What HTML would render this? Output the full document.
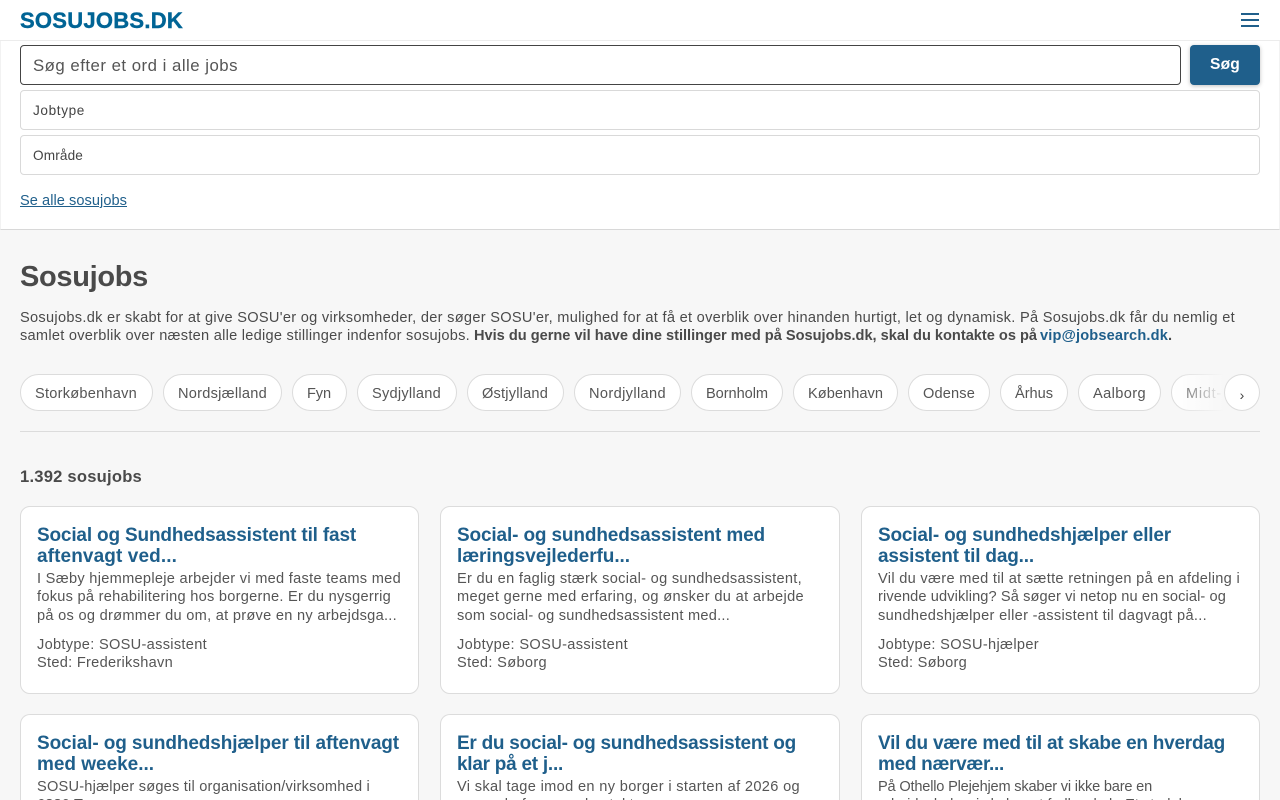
<!DOCTYPE html>
<html lang="da">
<head>
<meta charset="utf-8">
<title>Sosujobs</title>
<style>
html,body{margin:0;padding:0;width:1280px;height:800px;overflow:hidden;background:#f7f7f7;font-family:"Liberation Sans",sans-serif;color:#4a4a4a}
#page{position:relative;width:1280px;height:800px;overflow:hidden;background:#f7f7f7}
a{color:inherit}
.t{position:absolute;white-space:nowrap;line-height:20px;display:block}
.box{position:absolute;box-sizing:border-box;background:#fff}
#hdr{position:absolute;left:0;top:0;width:1280px;height:41px;background:#fff;border-bottom:1px solid #ececec;box-sizing:border-box}
#panel{position:absolute;left:0;top:41px;width:1280px;height:189px;background:#fff;border-bottom:1px solid #d8d8d8;border-left:1px solid #f2f2f2;border-right:1px solid #f2f2f2;box-sizing:border-box}
.bar{position:absolute;left:1241px;width:18px;height:2px;background:#1f5f8b}
.sel{border:1px solid #d9d9d9;border-radius:4px;left:20px;width:1240px;height:40px}
.chip{top:374px;height:37px;border:1px solid #dcdcdc;border-radius:19px}
.chip .t{left:14px;top:9px;font-size:14.6px;color:#555}
.card{width:400px;height:188px;border:1px solid #dcdcdc;border-radius:10px}
.card.cut{height:86px;border-bottom:0;border-radius:10px 10px 0 0;overflow:hidden}
.card .t{left:16px}
.h1,.h2{font-size:19px;font-weight:700;color:#1f5f8b}
.h1{top:19px}.h2{top:40px}
.d1,.d2,.d3,.m1,.m2{font-size:14.6px;color:#555}
.d1{top:62px}.d2{top:80px}.d3{top:99px}.m1{top:128px}.m2{top:146px}
</style>
</head>
<body>
<div id="page">
<div id="hdr"></div>
<div id="panel"></div>
<a class="t" style="left:20px;top:11px;width:163px;font-size:22px;font-weight:700;color:#006495;text-decoration:none;-webkit-text-stroke:.4px #006495">SOSUJOBS.DK</a>
<div class="bar" style="top:13px"></div>
<div class="bar" style="top:19px"></div>
<div class="bar" style="top:25px"></div>

<div class="box" style="left:20px;top:45px;width:1161px;height:40px;border:1px solid #444;border-radius:4px"></div>
<span class="t" style="left:33px;top:56px;width:205px;font-size:16.8px;color:#555">Søg efter et ord i alle jobs</span>
<div class="box" style="left:1190px;top:45px;width:70px;height:40px;background:#1f5f8b;border-radius:4px;box-shadow:0 1px 4px rgba(0,0,0,.25)"></div>
<span class="t" style="left:1210px;top:55px;width:30px;font-size:15.6px;font-weight:700;color:#fff">Søg</span>
<div class="box sel" style="top:90px"></div>
<span class="t" style="left:33px;top:101px;width:52px;font-size:13.6px;color:#444">Jobtype</span>
<div class="box sel" style="top:135px"></div>
<span class="t" style="left:33px;top:146px;width:50px;font-size:13.6px;color:#444">Område</span>
<a class="t" style="left:20px;top:191px;width:107px;font-size:14.6px;color:#1f5f8b;text-decoration:underline">Se alle sosujobs</a>

<h1 class="t" style="margin:0;left:20px;top:267px;width:128px;font-size:29px;font-weight:700;color:#4a4a4a">Sosujobs</h1>
<span class="t" style="left:20px;top:308px;width:1215px;font-size:14.6px">Sosujobs.dk er skabt for at give SOSU'er og virksomheder, der søger SOSU'er, mulighed for at få et overblik over hinanden hurtigt, let og dynamisk. På Sosujobs.dk får du nemlig et</span>
<span class="t" style="left:20px;top:326px;width:450px;font-size:14.6px">samlet overblik over næsten alle ledige stillinger indenfor sosujobs.</span>
<b class="t" style="left:474px;top:326px;width:563px;font-size:14.6px">Hvis du gerne vil have dine stillinger med på Sosujobs.dk, skal du kontakte os på</b>
<a class="t" style="left:1040px;top:326px;width:128px;font-size:14.6px;font-weight:700;color:#1f5f8b;text-decoration:none">vip@jobsearch.dk</a>
<b class="t" style="left:1168px;top:326px;width:5px;font-size:14.6px">.</b>

<div class="box chip" style="left:20px;width:133px"><span class="t" style="width:102px">Storkøbenhavn</span></div>
<div class="box chip" style="left:163px;width:119px"><span class="t" style="width:89px">Nordsjælland</span></div>
<div class="box chip" style="left:292px;width:55px"><span class="t" style="width:24px">Fyn</span></div>
<div class="box chip" style="left:357px;width:100px"><span class="t" style="width:69px">Sydjylland</span></div>
<div class="box chip" style="left:467px;width:97px"><span class="t" style="width:66px">Østjylland</span></div>
<div class="box chip" style="left:574px;width:107px"><span class="t" style="width:77px">Nordjylland</span></div>
<div class="box chip" style="left:691px;width:92px"><span class="t" style="width:62px">Bornholm</span></div>
<div class="box chip" style="left:793px;width:105px"><span class="t" style="width:75px">København</span></div>
<div class="box chip" style="left:908px;width:82px"><span class="t" style="width:52px">Odense</span></div>
<div class="box chip" style="left:1000px;width:68px"><span class="t" style="width:38px">Århus</span></div>
<div class="box chip" style="left:1078px;width:83px"><span class="t" style="width:53px">Aalborg</span></div>
<div class="box chip" style="left:1171px;width:72px"><span class="t" style="width:36px">Midt-</span></div>
<div style="position:absolute;left:1172px;top:372px;width:72px;height:41px;background:linear-gradient(90deg,rgba(247,247,247,0) 0,#f7f7f7 72%)"></div>
<div class="box" style="left:1224px;top:374px;width:36px;height:37px;border:1px solid #dcdcdc;border-radius:50%"></div>
<span style="position:absolute;left:1224px;top:385px;width:36px;text-align:center;font-size:14px;line-height:20px;color:#444">›</span>
<div style="position:absolute;left:20px;top:431px;width:1240px;height:1px;background:#dcdcdc"></div>

<span class="t" style="left:20px;top:467px;width:122px;font-size:16.6px;font-weight:700">1.392 sosujobs</span>

<div class="box card" style="left:20px;top:506px;width:399px">
<a class="t h1" style="width:319px">Social og Sundhedsassistent til fast</a>
<a class="t h2" style="width:140px">aftenvagt ved...</a>
<span class="t d1" style="width:364px">I Sæby hjemmepleje arbejder vi med faste teams med</span>
<span class="t d2" style="width:354px">fokus på rehabilitering hos borgerne. Er du nysgerrig</span>
<span class="t d3" style="width:360px">på os og drømmer du om, at prøve en ny arbejdsga...</span>
<span class="t m1" style="width:170px">Jobtype: SOSU-assistent</span>
<span class="t m2" style="width:136px">Sted: Frederikshavn</span>
</div>
<div class="box card" style="left:440px;top:506px">
<a class="t h1" style="width:308px">Social- og sundhedsassistent med</a>
<a class="t h2" style="width:173px">læringsvejlederfu...</a>
<span class="t d1" style="width:345px">Er du en faglig stærk social- og sundhedsassistent,</span>
<span class="t d2" style="width:347px">meget gerne med erfaring, og ønsker du at arbejde</span>
<span class="t d3" style="width:273px">som social- og sundhedsassistent med...</span>
<span class="t m1" style="width:171px">Jobtype: SOSU-assistent</span>
<span class="t m2" style="width:90px">Sted: Søborg</span>
</div>
<div class="box card" style="left:861px;top:506px;width:399px">
<a class="t h1" style="width:293px">Social- og sundhedshjælper eller</a>
<a class="t h2" style="width:156px">assistent til dag...</a>
<span class="t d1" style="width:362px">Vil du være med til at sætte retningen på en afdeling i</span>
<span class="t d2" style="width:348px">rivende udvikling? Så søger vi netop nu en social- og</span>
<span class="t d3" style="width:329px">sundhedshjælper eller -assistent til dagvagt på...</span>
<span class="t m1" style="width:161px">Jobtype: SOSU-hjælper</span>
<span class="t m2" style="width:89px">Sted: Søborg</span>
</div>

<div class="box card cut" style="left:20px;top:714px;width:399px">
<a class="t h1" style="width:362px">Social- og sundhedshjælper til aftenvagt</a>
<a class="t h2" style="width:117px">med weeke...</a>
<span class="t d1" style="width:333px">SOSU-hjælper søges til organisation/virksomhed i</span>
<span class="t d2" style="width:70px">6880 Tarm</span>
</div>
<div class="box card cut" style="left:440px;top:714px">
<a class="t h1" style="width:339px">Er du social- og sundhedsassistent og</a>
<a class="t h2" style="width:106px">klar på et j...</a>
<span class="t d1" style="width:343px">Vi skal tage imod en ny borger i starten af 2026 og</span>
<span class="t d2" style="width:223px">søger derfor en ny kontaktperson</span>
</div>
<div class="box card cut" style="left:861px;top:714px;width:399px">
<a class="t h1" style="width:347px">Vil du være med til at skabe en hverdag</a>
<a class="t h2" style="width:126px">med nærvær...</a>
<span class="t d1" style="width:274px">På Othello Plejehjem skaber vi ikke bare en</span>
<span class="t d2" style="width:329px">arbejdsplads, vi skaber et fællesskab. Et sted, hvor</span>
</div>
</div>

<script>
document.querySelectorAll('.t').forEach(function(e){
  var r=document.createRange();r.selectNodeContents(e);
  var n=r.getBoundingClientRect().width,w=parseFloat(e.style.width);
  e.style.letterSpacing=((w-n)/Math.max(1,e.textContent.length))+'px';
});
</script>
</body>
</html>
